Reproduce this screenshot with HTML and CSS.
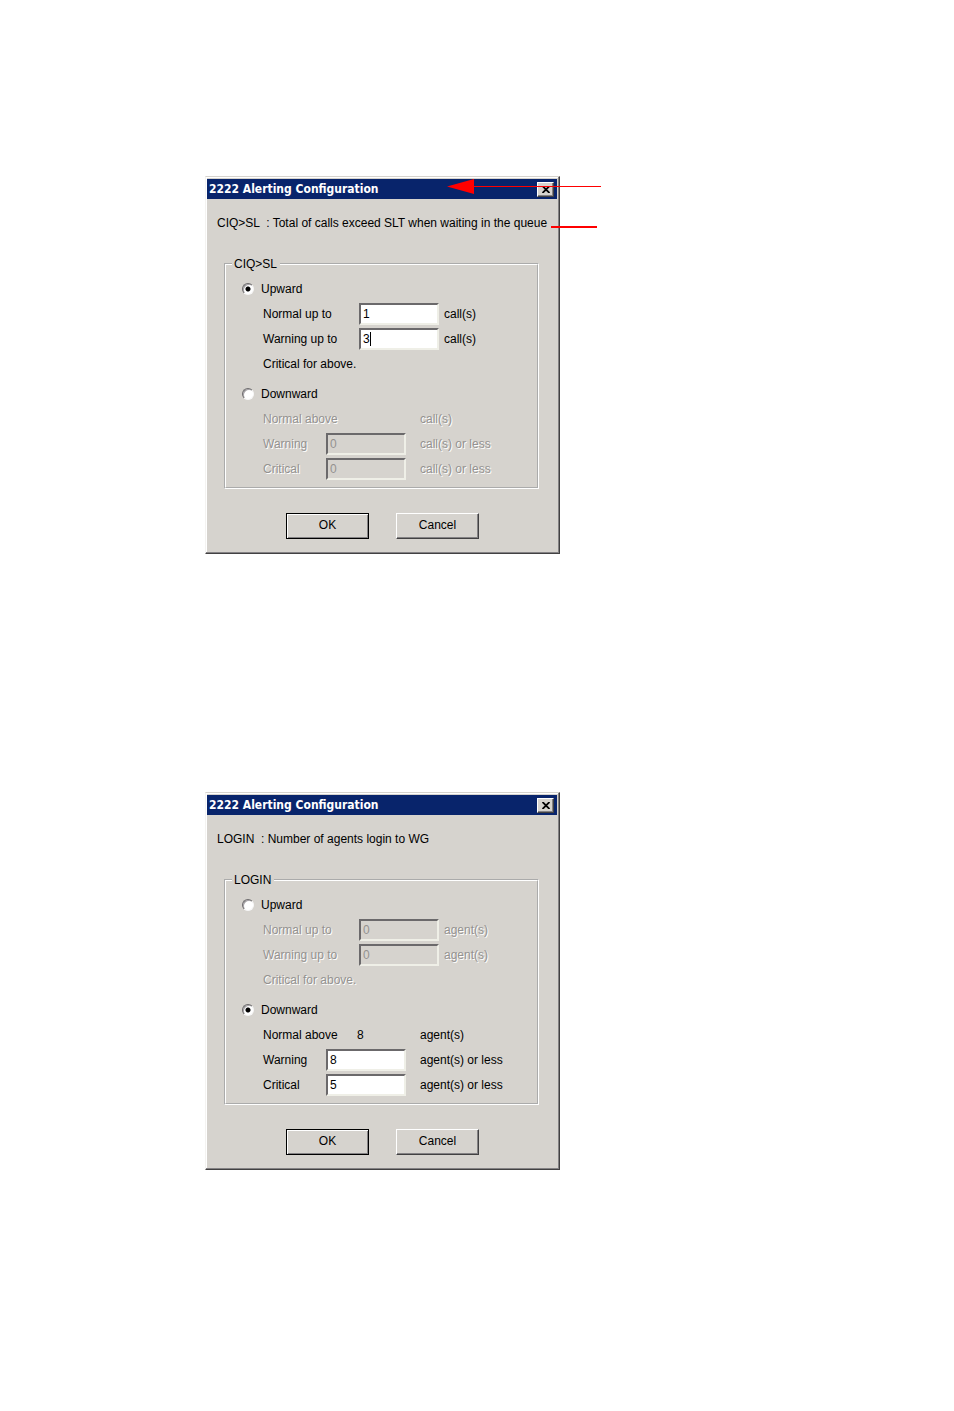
FILE: index.html
```
<!DOCTYPE html>
<html lang="en">

<head>
    <meta charset="UTF-8">
    <meta name="viewport" content="width=device-width, initial-scale=1.0">
    <title>2222 Alerting Configuration</title>
    <link rel="stylesheet" href="styles.css">
</head>

<body>
    <main class="page">

        <!-- CIQ>SL -->
        <form class="dialog">
            <div class="titlebar">
                <h2>2222 Alerting Configuration</h2>
                <button type="button" class="close" aria-label="Close">
                    <svg viewBox="0 0 8 7"><path d="M0.5 0 L7.5 7 M7.5 0 L0.5 7"></path></svg>
                </button>
            </div>
            <p class="desc">CIQ&gt;SL &nbsp;: Total of calls exceed SLT when waiting in the queue</p>

            <fieldset class="group">
                <legend>CIQ&gt;SL</legend>
                <div class="up">
                    <label class="row choice"><input type="radio" name="ciq" checked>Upward</label>
                    <div class="row">
                        <label for="ciq-un">Normal up to</label>
                        <input type="text" id="ciq-un" value="1">
                        <span>call(s)</span>
                    </div>
                    <div class="row">
                        <label for="ciq-uw">Warning up to</label>
                        <input type="text" id="ciq-uw" class="caret" value="3">
                        <span>call(s)</span>
                    </div>
                    <div class="row">Critical for above.</div>
                </div>
                <div class="down">
                    <label class="row choice"><input type="radio" name="ciq">Downward</label>
                    <div class="row above off">
                        <span>Normal above</span>
                        <output></output>
                        <span>call(s)</span>
                    </div>
                    <div class="row off">
                        <label for="ciq-dw">Warning</label>
                        <input type="text" id="ciq-dw" value="0" disabled>
                        <span>call(s) or less</span>
                    </div>
                    <div class="row off">
                        <label for="ciq-dc">Critical</label>
                        <input type="text" id="ciq-dc" value="0" disabled>
                        <span>call(s) or less</span>
                    </div>
                </div>
            </fieldset>

            <div class="buttons">
                <button type="submit" class="btn default">OK</button>
                <button type="button" class="btn">Cancel</button>
            </div>

            <!-- callout lines -->
            <svg class="callout" viewBox="0 0 160 60">
                <rect x="26" y="10" width="128" height="1"></rect>
                <polygon points="0,10.5 27,3 27,18"></polygon>
                <rect x="104" y="50" width="46" height="2"></rect>
            </svg>
        </form>

        <!-- LOGIN -->
        <form class="dialog">
            <div class="titlebar">
                <h2>2222 Alerting Configuration</h2>
                <button type="button" class="close" aria-label="Close">
                    <svg viewBox="0 0 8 7"><path d="M0.5 0 L7.5 7 M7.5 0 L0.5 7"></path></svg>
                </button>
            </div>
            <p class="desc">LOGIN &nbsp;: Number of agents login to WG</p>

            <fieldset class="group">
                <legend>LOGIN</legend>
                <div class="up">
                    <label class="row choice"><input type="radio" name="login">Upward</label>
                    <div class="row off">
                        <label for="login-un">Normal up to</label>
                        <input type="text" id="login-un" value="0" disabled>
                        <span>agent(s)</span>
                    </div>
                    <div class="row off">
                        <label for="login-uw">Warning up to</label>
                        <input type="text" id="login-uw" value="0" disabled>
                        <span>agent(s)</span>
                    </div>
                    <div class="row off">Critical for above.</div>
                </div>
                <div class="down">
                    <label class="row choice"><input type="radio" name="login" checked>Downward</label>
                    <div class="row above">
                        <span>Normal above</span>
                        <output>8</output>
                        <span>agent(s)</span>
                    </div>
                    <div class="row">
                        <label for="login-dw">Warning</label>
                        <input type="text" id="login-dw" value="8">
                        <span>agent(s) or less</span>
                    </div>
                    <div class="row">
                        <label for="login-dc">Critical</label>
                        <input type="text" id="login-dc" value="5">
                        <span>agent(s) or less</span>
                    </div>
                </div>
            </fieldset>

            <div class="buttons">
                <button type="submit" class="btn default">OK</button>
                <button type="button" class="btn">Cancel</button>
            </div>
        </form>

    </main>
</body>

</html>
```
FILE: styles.css
```
* {
    box-sizing: border-box;
}

body {
    margin: 0;
    background: #fff;
    color: #000;
    font: 12px/14px "Liberation Sans", Arial, sans-serif;
}

.page {
    display: flex;
    flex-direction: column;
    gap: 238px;
    padding: 176px 24px 176px 205px;
}

/* dialog window */
.dialog {
    position: relative;
    width: 355px;
    padding: 2px 1px 14px 1px;
    background: #d6d3ce;
    border: 1px solid;
    border-color: #d6d3ce #424142 #424142 #f4f3f1;
    box-shadow: inset -1px -1px #848284, inset 1px 1px #fff;
}

.titlebar {
    display: flex;
    align-items: center;
    justify-content: space-between;
    height: 20px;
    margin-right: 1px;
    padding: 0 3px 0 2px;
    background: #08246b;
}

.titlebar h2 {
    margin: 0;
    color: #fff;
    font: bold 12px/14px "DejaVu Sans Condensed", "DejaVu Sans", sans-serif;
}

.close {
    display: flex;
    align-items: center;
    justify-content: center;
    width: 17px;
    height: 15px;
    padding: 0;
    background: #d6d3ce;
    border: 1px solid;
    border-color: #fff #424142 #424142 #fff;
    box-shadow: inset -1px -1px #848284;
}

.close svg {
    width: 8px;
    height: 7px;
}

.close path {
    fill: none;
    stroke: #000;
    stroke-width: 1.8;
}

.desc {
    margin: 17px 0 27px 10px;
    white-space: nowrap;
}

/* group box */
.group {
    margin: 0 19px 24px 17px;
    padding: 5px 0 6px 0;
    border: 2px groove #fff;
}

.group legend {
    margin-left: 6px;
    padding: 0 3px 0 2px;
}

.row {
    display: flex;
    align-items: center;
    height: 25px;
    padding-left: 37px;
    white-space: nowrap;
}

.choice {
    padding-left: 16px;
}

.down {
    margin-top: 5px;
}

.up .row > label {
    width: 96px;
}

.down .row > label {
    width: 63px;
}

.row span {
    margin-left: 6px;
}

.down .row span {
    margin-left: 15px;
}

.down .above span:first-child {
    width: 94px;
    margin-left: 0;
}

.above output {
    width: 48px;
}

.off {
    color: #949290;
    text-shadow: 1px 1px #fff;
}

input[type="text"] {
    width: 80px;
    height: 22px;
    margin: 0 -1px 0 0;
    padding: 0 2px;
    background: #fff;
    border: 2px solid;
    border-color: #6b696b #efefe7 #efefe7 #6b696b;
    border-radius: 0;
    color: #000;
    font: inherit;
}

input[type="text"]:disabled {
    background: #d6d3ce;
    color: #949290;
}

input.caret {
    background: linear-gradient(#000, #000) 9px center/1px 14px no-repeat #fff;
}

input[type="radio"] {
    appearance: none;
    width: 12px;
    height: 12px;
    margin: 0 7px 0 0;
    background: #fff;
    border: 1px solid;
    border-color: #6b696b #f7f7f7 #f7f7f7 #6b696b;
    border-radius: 50%;
    box-shadow: inset 1px 1px #a5a2a5;
}

input[type="radio"]:checked {
    background: radial-gradient(circle, #000 2px, #fff 3px);
}

/* ok, cancel */
.buttons {
    display: flex;
    justify-content: center;
    gap: 27px;
}

.btn {
    width: 83px;
    height: 26px;
    padding: 0 0 2px;
    background: #d6d3ce;
    border: 1px solid;
    border-color: #fff #424142 #424142 #fff;
    box-shadow: inset -1px -1px #848284;
    color: #000;
    font: inherit;
}

.default {
    border-color: #000;
    box-shadow: inset 1px 1px #fff, inset -1px -1px #848284;
}

.callout {
    position: absolute;
    top: -1px;
    left: 241px;
    width: 160px;
    height: 60px;
    fill: #f00;
    pointer-events: none;
}
```
